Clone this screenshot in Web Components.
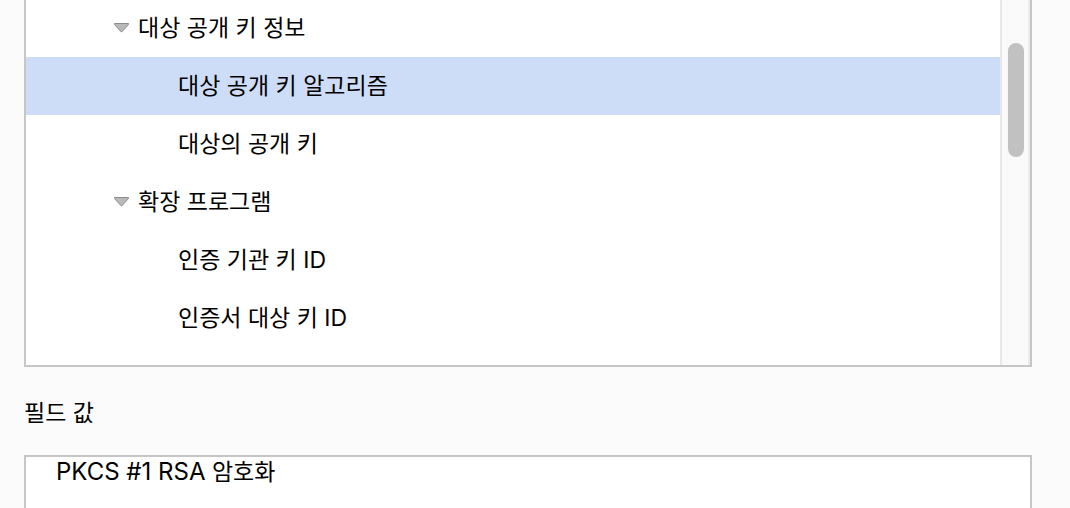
<!DOCTYPE html>
<html lang="ko">
<head>
<meta charset="utf-8">
<title>인증서 뷰어</title>
<style>
body { margin: 0; background: #fbfbfb; color: #000; font: 23px/58px Inter, "Noto Sans CJK KR", sans-serif; }
field-value span { font-size: 24px; }
</style>
</head>
<body>
<certificate-details>
  <field-tree>
    <field-group label="대상 공개 키 정보">
      <field-item selected>대상 공개 키 알고리즘</field-item>
      <field-item>대상의 공개 키</field-item>
    </field-group>
    <field-group label="확장 프로그램">
      <field-item>인증 기관 키 ID</field-item>
      <field-item>인증서 대상 키 ID</field-item>
    </field-group>
  </field-tree>
  <field-value label="필드 값"><span lang="en">PKCS #1 RSA</span> 암호화</field-value>
</certificate-details>
<script>
const define = (name, html, setup) => customElements.define(name, class extends HTMLElement {
  constructor() {
    super();
    this.attachShadow({ mode: "open" }).innerHTML = html;
  }
  connectedCallback() { if (setup) setup(this, this.shadowRoot); }
});

define("certificate-details", `
  <style>:host { box-sizing: border-box; display: flex; flex-direction: column; min-height: 100vh; padding: 0 38px 0 24px; }</style>
  <slot></slot>`);

define("field-tree", `
  <style>
    :host { display: flex; background: #fff; border: 2px solid #c6c6c6; border-top: 0; }
    .rows { flex: 1; min-width: 0; padding-bottom: 18px; }
    .track { box-sizing: border-box; width: 30px; padding: 43px 4px 0 6px; background: #fafafa; border-left: 2px solid #e8e8e8; border-right: 2px solid #ebebeb; }
    .thumb { width: 16px; height: 114px; border-radius: 8px; background: #c1c1c1; }
  </style>
  <div class="rows" role="tree"><slot></slot></div>
  <div class="track"><div class="thumb"></div></div>`);

define("field-group", `
  <style>
    :host { display: block; }
    .head { display: flex; align-items: center; gap: 9px; padding-left: 88px; height: 58px; }
    svg { display: block; width: 15px; height: 10px; }
    :host(:first-child) .head { height: 55px; padding-bottom: 2px; }
  </style>
  <div class="head">
    <svg viewBox="0 0 15 10" aria-hidden="true"><path d="M.5.5h14v1L8 8.7H7L.5 1.5z" fill="#b9b9b9" stroke="#8c8c8c"/></svg>
    <span></span>
  </div>
  <slot></slot>`, (host, root) => {
  host.setAttribute("role", "treeitem");
  root.querySelector("span").textContent = host.getAttribute("label");
});

define("field-item", `
  <style>
    :host { display: block; padding-left: 152px; height: 58px; }
    :host([selected]) { background: #cdddf7; }
  </style>
  <slot></slot>`, host => host.setAttribute("role", "treeitem"));

define("field-value", `
  <style>
    :host { flex: 1; display: flex; flex-direction: column; padding-top: 30px; }
    .label { line-height: 32px; }
    .box { flex: 1; margin-top: 26px; padding: 0 30px; line-height: 30px; background: #fff; border: 2px solid #c6c6c6; border-bottom: 0; }
  </style>
  <div class="label" id="label"></div>
  <div class="box" role="region" aria-labelledby="label"><slot></slot></div>`, (host, root) => {
  root.getElementById("label").textContent = host.getAttribute("label");
});
</script>
</body>
</html>
